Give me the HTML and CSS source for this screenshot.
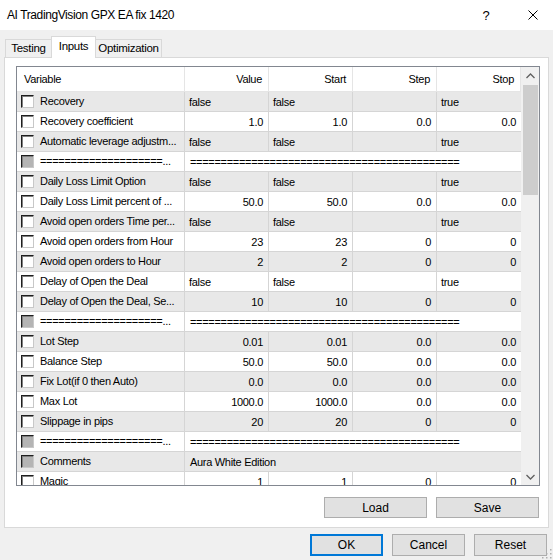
FILE: index.html
```html
<!DOCTYPE html>
<html lang="en">
<head>
    <meta charset="UTF-8">
    <title>AI TradingVision GPX EA fix 1420</title>
    <link rel="stylesheet" href="styles.css">
</head>
<body>

    <!-- Title bar -->
    <div class="titlebar">
        <span class="title">AI TradingVision GPX EA fix 1420</span>
        <span class="help">?</span>
        <svg class="close" width="10" height="10" viewBox="0 0 10 10">
            <path d="M0.5 0.5 L9.5 9.5 M9.5 0.5 L0.5 9.5" stroke="#000" stroke-width="1" fill="none"/>
        </svg>
    </div>

    <!-- Tabs -->
    <div class="tabs">
        <div class="tab tab-testing">Testing</div>
        <div class="tab tab-inputs active">Inputs</div>
        <div class="tab tab-optim">Optimization</div>
    </div>

    <div class="panel">
        <div class="list">
            <div class="grid-wrap">
                <table class="grid">
                    <colgroup>
                        <col class="c-var"><col class="c-num"><col class="c-num"><col class="c-num"><col class="c-num">
                    </colgroup>
                    <thead>
                        <tr>
                            <th class="left">Variable</th>
                            <th>Value</th>
                            <th>Start</th>
                            <th>Step</th>
                            <th>Stop</th>
                        </tr>
                    </thead>
                    <tbody>
                        <tr class="odd">
                            <td><span class="check"></span>Recovery</td>
                            <td class="left">false</td><td class="left">false</td><td></td><td class="left">true</td>
                        </tr>
                        <tr>
                            <td><span class="check"></span>Recovery coefficient</td>
                            <td>1.0</td><td>1.0</td><td>0.0</td><td>0.0</td>
                        </tr>
                        <tr class="odd">
                            <td><span class="check"></span>Automatic leverage adjustm...</td>
                            <td class="left">false</td><td class="left">false</td><td></td><td class="left">true</td>
                        </tr>
                        <tr>
                            <td><span class="check off"></span>====================...</td>
                            <td class="left span" colspan="4">============================================</td>
                        </tr>
                        <tr class="odd">
                            <td><span class="check"></span>Daily Loss Limit Option</td>
                            <td class="left">false</td><td class="left">false</td><td></td><td class="left">true</td>
                        </tr>
                        <tr>
                            <td><span class="check"></span>Daily Loss Limit percent of ...</td>
                            <td>50.0</td><td>50.0</td><td>0.0</td><td>0.0</td>
                        </tr>
                        <tr class="odd">
                            <td><span class="check"></span>Avoid open orders Time per...</td>
                            <td class="left">false</td><td class="left">false</td><td></td><td class="left">true</td>
                        </tr>
                        <tr>
                            <td><span class="check"></span>Avoid open orders from Hour</td>
                            <td>23</td><td>23</td><td>0</td><td>0</td>
                        </tr>
                        <tr class="odd">
                            <td><span class="check"></span>Avoid open orders to Hour</td>
                            <td>2</td><td>2</td><td>0</td><td>0</td>
                        </tr>
                        <tr>
                            <td><span class="check"></span>Delay of Open the Deal</td>
                            <td class="left">false</td><td class="left">false</td><td></td><td class="left">true</td>
                        </tr>
                        <tr class="odd">
                            <td><span class="check"></span>Delay of Open the Deal, Se...</td>
                            <td>10</td><td>10</td><td>0</td><td>0</td>
                        </tr>
                        <tr>
                            <td><span class="check off"></span>====================...</td>
                            <td class="left span" colspan="4">============================================</td>
                        </tr>
                        <tr class="odd">
                            <td><span class="check"></span>Lot Step</td>
                            <td>0.01</td><td>0.01</td><td>0.0</td><td>0.0</td>
                        </tr>
                        <tr>
                            <td><span class="check"></span>Balance Step</td>
                            <td>50.0</td><td>50.0</td><td>0.0</td><td>0.0</td>
                        </tr>
                        <tr class="odd">
                            <td><span class="check"></span>Fix Lot(if 0 then Auto)</td>
                            <td>0.0</td><td>0.0</td><td>0.0</td><td>0.0</td>
                        </tr>
                        <tr>
                            <td><span class="check"></span>Max Lot</td>
                            <td>1000.0</td><td>1000.0</td><td>0.0</td><td>0.0</td>
                        </tr>
                        <tr class="odd">
                            <td><span class="check"></span>Slippage in pips</td>
                            <td>20</td><td>20</td><td>0</td><td>0</td>
                        </tr>
                        <tr>
                            <td><span class="check off"></span>====================...</td>
                            <td class="left span" colspan="4">============================================</td>
                        </tr>
                        <tr class="odd">
                            <td><span class="check off"></span>Comments</td>
                            <td class="left span" colspan="4">Aura White Edition</td>
                        </tr>
                        <tr>
                            <td><span class="check"></span>Magic</td>
                            <td>1</td><td>1</td><td>0</td><td>0</td>
                        </tr>
                    </tbody>
                </table>
            </div>

            <!-- Vertical scrollbar -->
            <div class="scrollbar">
                <div class="arrow">
                    <svg width="9" height="6" viewBox="0 0 9 6"><path d="M0.5 5 L4.5 1 L8.5 5" stroke="#606060" stroke-width="1.3" fill="none"/></svg>
                </div>
                <div class="thumb"></div>
                <div class="track"></div>
                <div class="arrow">
                    <svg width="9" height="6" viewBox="0 0 9 6"><path d="M0.5 1 L4.5 5 L8.5 1" stroke="#606060" stroke-width="1.3" fill="none"/></svg>
                </div>
            </div>
        </div>

        <div class="panel-actions">
            <button class="button wide">Load</button>
            <button class="button wide">Save</button>
        </div>
    </div>

    <!-- Dialog buttons -->
    <div class="footer">
        <button class="button default">OK</button>
        <button class="button">Cancel</button>
        <button class="button">Reset</button>
    </div>

    <svg class="grip" width="10" height="10" viewBox="0 0 10 10">
        <rect x="8" y="0" width="1.5" height="1.5" fill="#b0b0b0"/>
        <rect x="8" y="4" width="1.5" height="1.5" fill="#b0b0b0"/>
        <rect x="4" y="4" width="1.5" height="1.5" fill="#b0b0b0"/>
        <rect x="8" y="8" width="1.5" height="1.5" fill="#b0b0b0"/>
        <rect x="4" y="8" width="1.5" height="1.5" fill="#b0b0b0"/>
        <rect x="0" y="8" width="1.5" height="1.5" fill="#b0b0b0"/>
    </svg>

</body>
</html>
```

FILE: styles.css
```css
body {
    font-family: "Liberation Sans", Arial, sans-serif;
    font-size: 11px;
    color: #000;
    background: #f0f0f0;
    margin: 0;
    width: 553px;
    height: 560px;
    overflow: hidden;
    position: relative;
}

/* title bar */
.titlebar { height: 30px; background: #fff; display: flex; align-items: center; padding-left: 7px; font-size: 12px; }
.title { flex: 1; letter-spacing: -0.4px; }
.help { width: 12px; text-align: center; font-size: 13px; margin-right: 36px; }
.close { margin-right: 15px; }

/* tabs */
.tabs { display: flex; align-items: flex-end; height: 21px; margin-top: 6px; padding-left: 5px; }
.tab {
    box-sizing: border-box; height: 18px; line-height: 16px; text-align: center;
    border: 1px solid #d9d9d9; border-bottom: none; background: #f0f0f0; font-size: 11.5px; letter-spacing: -0.3px;
}
.tab-testing { width: 46px; border-right: none; }
.tab-inputs { width: 45px; }
.tab-optim { width: 66px; border-left: none; }
.tab.active { height: 22px; margin-bottom: -1px; line-height: 19px; background: #fff; position: relative; z-index: 1; }

/* panel */
.panel {
    box-sizing: border-box; margin-left: 4px; width: 545px; height: 471px;
    border: 1px solid #d9d9d9; background: #fff; padding: 8px 0 0 11px;
}
.list { box-sizing: border-box; width: 524px; height: 420px; border: 1px solid #828790; display: flex; background: #fff; }
.grid-wrap { width: 504px; height: 418px; overflow: hidden; }

.grid { table-layout: fixed; border-collapse: separate; border-spacing: 0; width: 504px; letter-spacing: -0.3px; }
.c-var { width: 168px; }
.c-num { width: 84px; }
.grid th {
    height: 24px; padding: 0 6px 0 6px; font-weight: normal; text-align: right;
    border-right: 1px solid #e5e5e5; border-bottom: 1px solid #e5e5e5; white-space: nowrap;
}
.grid th.left { text-align: left; padding-left: 7px; }
.grid td {
    height: 19px; padding: 0 5px 0 4px; text-align: right; white-space: nowrap; overflow: hidden;
    border-right: 1px solid #d5d5d5; border-bottom: 1px solid #d5d5d5;
}
.grid td:first-child { text-align: left; padding-left: 4px; }
.grid td.left { text-align: left; }
.grid tr.odd td { background: #e8e8e8; }
.grid td:last-child { border-right: none; }
.grid td.span { border-right: none; padding-left: 5px; }

.check {
    display: inline-block; box-sizing: border-box; width: 13px; height: 13px; vertical-align: -3px; margin-right: 6px;
    border: 1px solid; border-color: #1e1e1e #c8c8c8 #c8c8c8 #1e1e1e; box-shadow: inset 1px 1px 0 #808080; background: #fff;
}
.check.off { background: #b4b4b4; }

/* scrollbar */
.scrollbar { width: 18px; background: #f0f0f0; display: flex; flex-direction: column; }
.arrow { height: 17px; display: flex; align-items: center; justify-content: center; }
.thumb { height: 110px; margin: 1px 1px 0 2px; background: #cdcdcd; }
.track { flex: 1; }

/* buttons */
.button {
    box-sizing: border-box; font-family: "Liberation Sans", Arial, sans-serif; font-size: 12px; color: #000;
    background: #e1e1e1; border: 1px solid #adadad; padding: 0; margin: 0;
}
.panel-actions { display: flex; justify-content: flex-end; gap: 9px; width: 523px; margin-top: 11px; }
.button.wide { width: 103px; height: 21px; }
.footer { display: flex; justify-content: flex-end; gap: 9px; padding-right: 6px; margin-top: 6px; }
.footer .button { width: 73px; height: 22px; }
.button.default { border: 2px solid #0078d7; }

.grip { position: absolute; right: 1px; bottom: 1px; }
```
